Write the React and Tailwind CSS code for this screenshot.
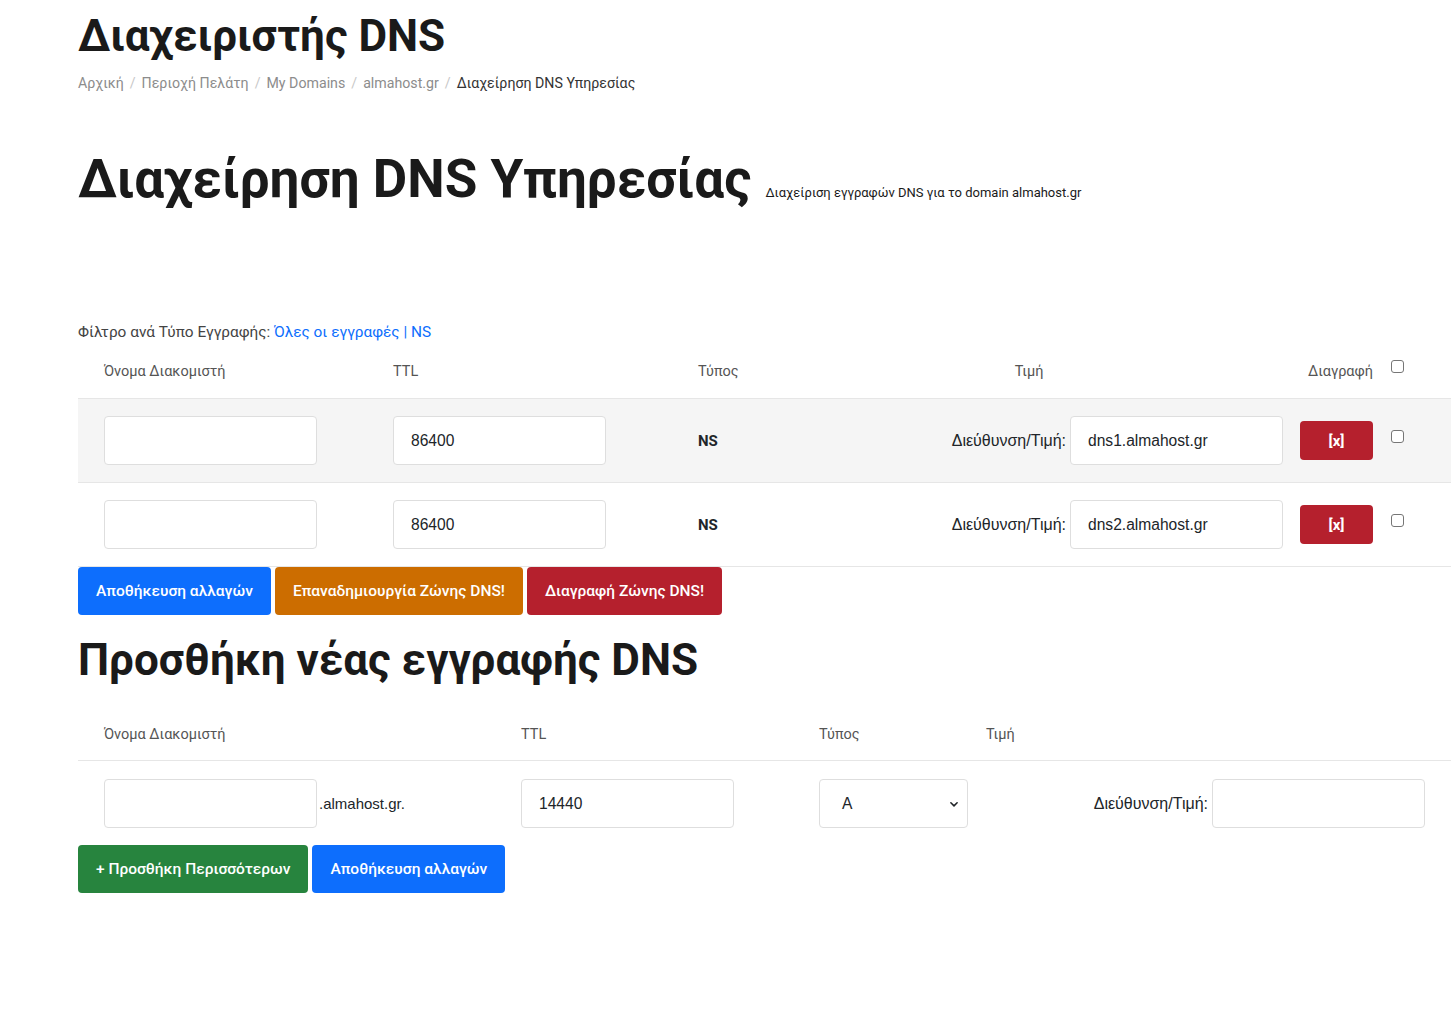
import React from "react";

const roboto = { fontFamily: "Roboto, 'Noto Sans', sans-serif" };

const crumbs = ["Αρχική", "Περιοχή Πελάτη", "My Domains", "almahost.gr"];

const records = [
    { ttl: "86400", type: "NS", value: "dns1.almahost.gr", shaded: true },
    { ttl: "86400", type: "NS", value: "dns2.almahost.gr", shaded: false },
];

const TextBox = ({ value = "", className = "" }) => (
    <input
        type="text"
        defaultValue={value}
        className={`h-[49px] w-[213px] rounded-[4px] border border-[#dedede] bg-white px-[17px] text-[15.6px] text-[#212529] font-['Liberation_Sans',Arial,sans-serif] outline-none ${className}`}
    />
);

const Btn = ({ color, children }) => (
    <button className={`h-[48px] rounded-[4px] px-[18px] text-[15.5px] font-medium text-white ${color}`}>
        {children}
    </button>
);

const CheckBox = () => (
    <span className="inline-block h-[13px] w-[13px] rounded-[3px] border border-[#767676] bg-white" />
);

const RecordRow = ({ ttl, type, value, shaded }) => (
    <div className={`grid h-[84px] grid-cols-[289px_305px_103px_508px_100px_1fr] items-center border-b border-[#e6e6e6] ${shaded ? "bg-[#f5f5f5]" : ""}`}>
        <div className="pl-[26px]">
            <TextBox />
        </div>
        <div className="pl-[26px]">
            <TextBox value={ttl} />
        </div>
        <div className="pl-[26px] text-[15px] font-bold text-[#212529]">{type}</div>
        <div className="flex items-center justify-end gap-[4px]">
            <span className="text-[16px] text-[#212529] font-['Liberation_Sans',Arial,sans-serif]">Διεύθυνση/Τιμή:</span>
            <TextBox value={value} />
        </div>
        <div className="pl-[17px]">
            <button className="h-[39px] w-[73px] rounded-[4px] bg-[#b5202d] text-[15px] font-bold text-white">[x]</button>
        </div>
        <div className="-mt-[6px] pl-[8px]">
            <CheckBox />
        </div>
    </div>
);

export default function App() {
    return (
        <div className="min-h-screen w-full bg-white pl-[78px] text-[#212529]" style={roboto}>
            <h1 className="pt-[8px] text-[44px] font-bold leading-[56px] text-[#1a1a1a]">Διαχειριστής DNS</h1>

            <nav className="mt-[9px] flex items-center text-[14.2px] text-[#8c8c8c]">
                {crumbs.map((c) => (
                    <React.Fragment key={c}>
                        <span>{c}</span>
                        <span className="px-[6px] text-[#c8c8c8]">/</span>
                    </React.Fragment>
                ))}
                <span className="text-[#333]">Διαχείρηση DNS Υπηρεσίας</span>
            </nav>

            <h2 className="mt-[53px] text-[53px] font-bold leading-[64px] text-[#1a1a1a]">
                Διαχείρηση DNS Υπηρεσίας
                <small className="ml-[14px] align-baseline text-[13px] font-normal text-[#1a1a1a]">
                    Διαχείριση εγγραφών DNS για το domain almahost.gr
                </small>
            </h2>

            <p className="mt-[96px] text-[15.4px] text-[#444]">
                Φίλτρο ανά Τύπο Εγγραφής: <a className="text-[#0d6efd]">Όλες οι εγγραφές</a>{" "}
                <span className="text-[#0d6efd]">|</span> <a className="text-[#0d6efd]">NS</a>
            </p>

            <div className="mt-[1px]">
                <div className="grid h-[54px] grid-cols-[289px_305px_103px_508px_100px_1fr] items-center border-b border-[#e6e6e6] text-[14.5px] text-[#555]">
                    <div className="pl-[26px]">Όνομα Διακομιστή</div>
                    <div className="pl-[26px]">TTL</div>
                    <div className="pl-[26px]">Τύπος</div>
                    <div className="text-center">Τιμή</div>
                    <div className="pr-[10px] text-right">Διαγραφή</div>
                    <div className="-mt-[6px] pl-[8px]">
                        <CheckBox />
                    </div>
                </div>
                {records.map((r, i) => (
                    <RecordRow key={i} {...r} />
                ))}
            </div>

            <div className="flex gap-[4px]">
                <Btn color="bg-[#0d6efd]">Αποθήκευση αλλαγών</Btn>
                <Btn color="bg-[#cc6d00]">Επαναδημιουργία Ζώνης DNS!</Btn>
                <Btn color="bg-[#b5202d]">Διαγραφή Ζώνης DNS!</Btn>
            </div>

            <h2 className="mt-[17px] text-[44px] font-bold leading-[56px] text-[#1a1a1a]">Προσθήκη νέας εγγραφής DNS</h2>

            <div className="mt-[21px]">
                <div className="grid h-[52px] grid-cols-[417px_298px_167px_1fr] items-center border-b border-[#e6e6e6] text-[14.5px] text-[#555]">
                    <div className="pl-[26px]">Όνομα Διακομιστή</div>
                    <div className="pl-[26px]">TTL</div>
                    <div className="pl-[26px]">Τύπος</div>
                    <div className="pl-[26px]">Τιμή</div>
                </div>
                <div className="grid h-[84px] grid-cols-[417px_298px_167px_1fr] items-center pt-[1px]">
                    <div className="flex items-center pl-[26px]">
                        <TextBox />
                        <span className="ml-[2px] text-[15px] font-['Liberation_Sans',Arial,sans-serif]">.almahost.gr.</span>
                    </div>
                    <div className="pl-[26px]">
                        <TextBox value="14440" />
                    </div>
                    <div className="pl-[26px]">
                        <div className="flex h-[49px] w-[149px] items-center justify-between rounded-[4px] border border-[#dedede] bg-white pl-[22px] pr-[8px] text-[15.6px] font-['Liberation_Sans',Arial,sans-serif]">
                            <span>A</span>
                            <svg width="10" height="10" viewBox="0 0 16 16" fill="none" stroke="#212529" strokeWidth="2.5" strokeLinecap="round" strokeLinejoin="round">
                                <path d="M3 6l5 5 5-5" />
                            </svg>
                        </div>
                    </div>
                    <div className="flex items-center justify-end gap-[4px] pr-[26px]">
                        <span className="text-[16px] font-['Liberation_Sans',Arial,sans-serif]">Διεύθυνση/Τιμή:</span>
                        <TextBox />
                    </div>
                </div>
            </div>

            <div className="flex gap-[4px] pb-[130px]">
                <Btn color="bg-[#27843e]">+ Προσθήκη Περισσότερων</Btn>
                <Btn color="bg-[#0d6efd]">Αποθήκευση αλλαγών</Btn>
            </div>
        </div>
    );
}
